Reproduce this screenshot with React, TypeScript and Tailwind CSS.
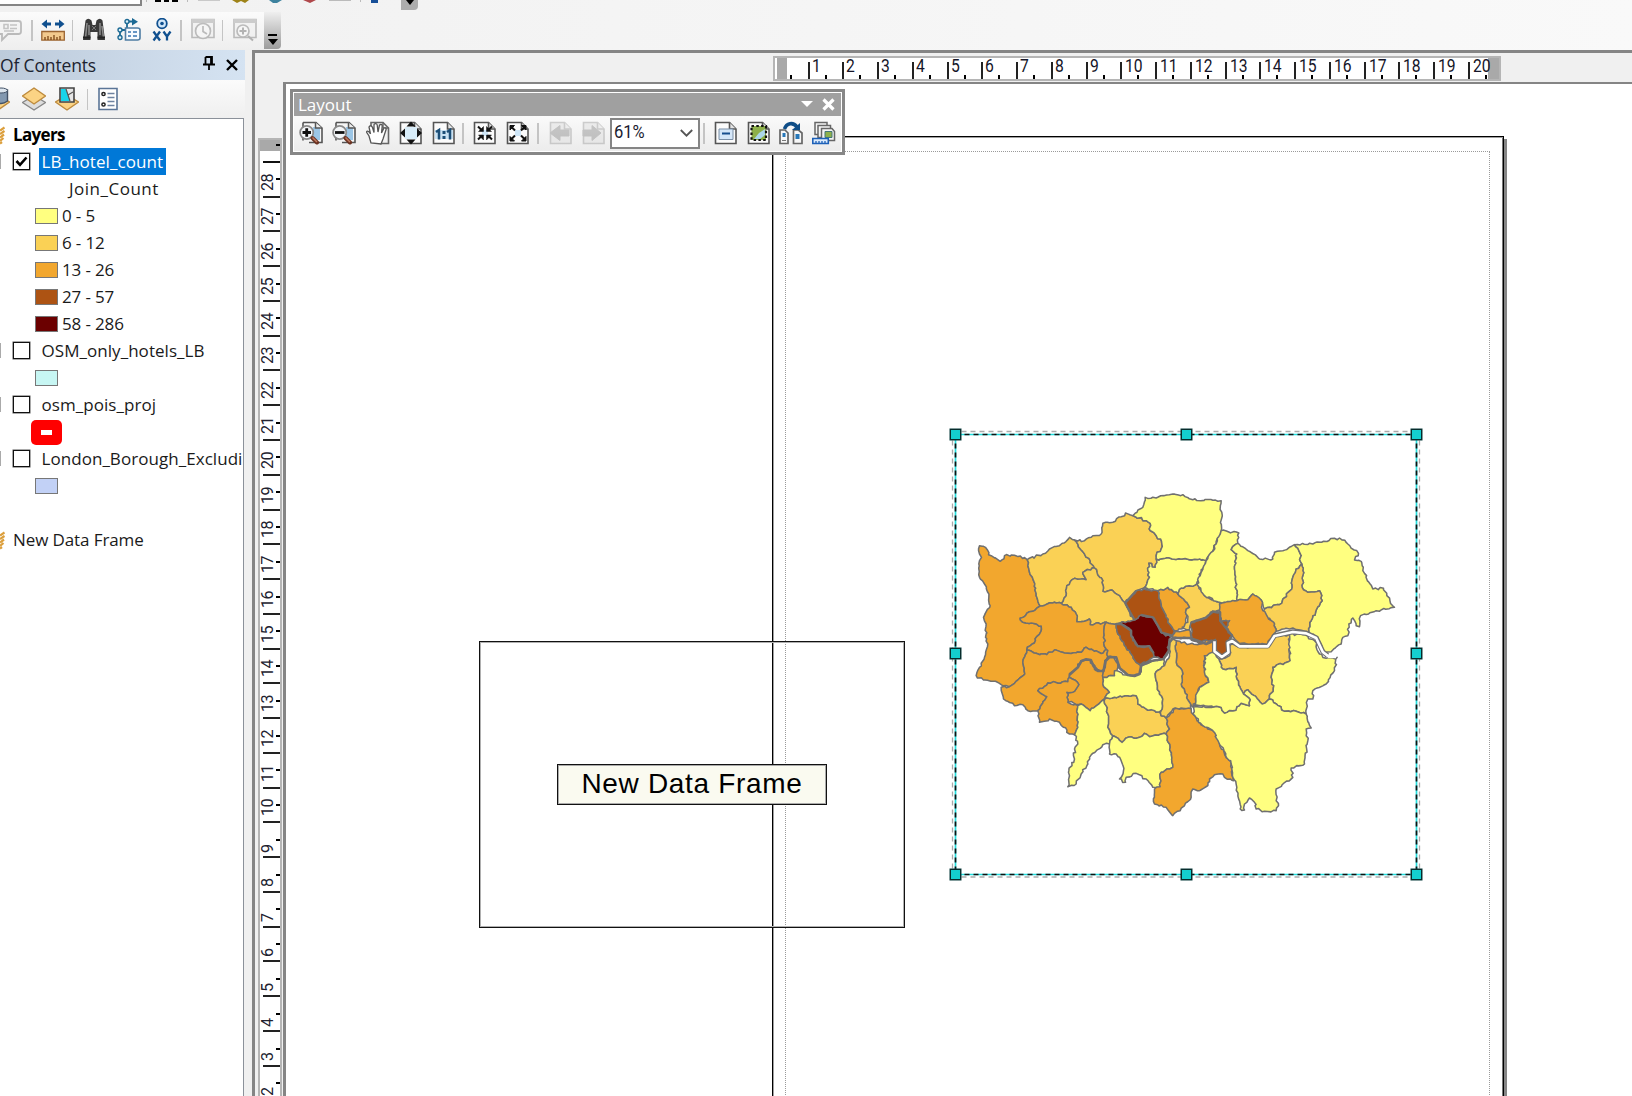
import React, { type ReactNode } from "react";

/* ---------- Map data (drawing units are a third of a pixel) ---------- */

const PALE = "#ffff80";
const LIGHT = "#fad155";
const ORANGE = "#f2a72e";
const BROWN = "#ad5313";
const DARK = "#6b0000";

const WEST: [string, string][] = [
  [ORANGE, "60,195 72,197 95,225 122,242 135,225 165,224 203,237 210,275 222,300 230,345 242,376 220,392 182,413 190,425 245,436 246,445 218,490 202,508 190,545 196,580 165,608 150,618 125,612 100,602 72,598 50,585 60,560 75,530 85,490 78,470 80,430 72,410 92,375 88,350 75,310 60,290 60,240 66,230 60,220"],
  [LIGHT, "203,237 250,220 270,205 300,195 330,170 345,178 375,220 405,262 370,275 380,297 345,293 322,315 320,345 305,368 285,365 242,376 230,345 222,300 210,275"],
  [LIGHT, "345,178 375,180 400,165 425,160 430,128 460,125 485,108 498,97 520,105 560,120 572,128 572,150 590,165 606,182 605,205 590,225 587,260 568,248 565,270 570,290 553,322 530,330 497,367 480,345 455,328 430,332 430,300 405,262 375,220"],
  [LIGHT, "405,262 430,300 430,332 455,328 480,345 497,367 512,395 525,418 505,422 470,430 440,425 392,432 390,415 375,422 352,423 350,400 335,380 305,368 320,345 322,315 345,293 380,297 370,275"],
  [ORANGE, "242,376 285,365 305,368 335,380 350,400 352,423 375,422 390,415 392,432 440,425 432,470 440,505 430,518 405,512 380,500 365,515 325,518 285,508 262,522 230,518 202,508 218,490 246,445 245,436 190,425 182,413 220,392"],
  [ORANGE, "202,508 230,518 262,522 285,508 325,518 365,515 380,500 405,512 430,518 440,505 445,510 445,528 437,540 432,573 410,570 392,537 365,540 355,560 330,580 325,603 265,607 235,630 262,648 235,690 205,690 190,672 165,675 132,655 125,620 150,618 165,608 196,580 190,545"],
  [ORANGE, "355,560 365,540 392,537 410,570 432,573 430,590 430,610 450,635 435,655 392,690 365,670 325,665 322,635 345,632 358,612 330,590 330,580"],
  [ORANGE, "437,540 445,528 465,528 475,560 465,585 430,590 432,573"],
  [ORANGE, "262,648 235,630 265,607 325,603 330,590 358,612 345,632 322,635 325,665 355,675 355,740 345,762 330,760 300,725 270,715 240,725 235,690"],
  [PALE, "355,675 365,670 392,690 435,655 445,700 445,740 460,765 450,790 430,792 390,830 385,850 365,880 350,910 325,918 328,870 345,835 345,805 355,790 345,762 355,740"],
  [LIGHT, "435,655 465,650 530,645 535,670 560,685 600,693 605,705 620,712 630,745 620,760 570,768 555,758 540,770 505,770 488,785 460,765 445,740 445,700"],
  [PALE, "430,590 465,585 465,570 500,583 540,580 545,555 580,540 612,535 615,555 590,573 590,600 600,640 608,650 605,690 600,693 560,685 535,670 530,645 465,650 435,655 450,635 430,610"],
  [PALE, "460,765 488,785 505,770 540,770 555,758 570,768 620,760 632,800 640,860 605,875 602,918 580,920 560,895 530,878 500,890 498,905 480,895 492,870 485,840 470,820 450,820 450,790"],
  [ORANGE, "440,425 470,430 475,460 500,500 530,545 543,555 540,580 505,583 480,560 470,530 445,528 445,510 440,505 432,470"],
  [BROWN, "470,430 485,430 515,450 515,465 535,495 570,495 582,515 590,530 545,550 530,545 500,500 475,460"],
  [DARK, "470,430 505,422 525,418 545,403 580,410 595,435 605,455 618,465 638,465 628,485 625,515 612,535 590,530 582,515 570,495 548,500 535,495 515,465 515,450 485,430"],
  [BROWN, "497,367 530,330 553,325 595,330 605,370 615,395 625,425 645,450 638,465 618,465 605,455 595,435 580,410 545,403 525,418 512,395"],
  [ORANGE, "595,330 625,320 655,340 672,355 690,380 678,395 682,435 665,445 645,450 625,425 615,395 605,370"],
  [ORANGE, "645,452 690,447 695,470 640,472"],
  [LIGHT, "655,340 665,322 712,310 735,345 780,365 780,388 760,392 740,410 695,425 690,447 668,440 685,425 678,395 690,380 672,355"],
  [PALE, "553,322 570,290 565,270 568,248 587,260 590,235 720,235 740,240 725,275 712,310 665,322 655,340 625,320 595,330"],
  [PALE, "520,105 550,80 557,50 590,52 640,40 670,42 700,57 785,60 785,150 770,190 740,240 720,235 590,235 590,225 605,205 606,182 590,165 572,150 572,128 560,120"],
  [ORANGE, "650,480 690,490 720,490 740,478 765,480 765,515 735,525 735,570 748,605 720,620 702,680 690,665 665,610 670,580 650,545"],
  [LIGHT, "640,475 650,480 650,545 670,580 665,610 690,665 695,685 640,685 620,712 605,705 605,690 608,650 600,640 590,600 590,573 615,555 630,520 630,485"],
  [ORANGE, "620,712 650,683 695,685 700,700 730,735 760,750 780,790 815,850 820,890 822,900 795,890 790,880 765,882 750,895 745,915 720,930 700,925 695,950 662,990 640,1005 620,980 585,970 585,925 602,918 605,875 640,860 632,800 620,760 630,745"],
];

const EAST: [string, string][] = [
  [PALE, "125,150 178,157 175,188 155,207 172,220 165,265 172,360 140,368 120,365 75,345 52,310 65,275 80,240 95,215 110,190"],
  [PALE, "175,188 205,210 240,235 280,235 285,215 310,210 345,192 358,210 367,250 350,265 340,290 338,320 300,372 255,385 245,358 225,350 220,340 205,357 172,360 165,265 172,220 155,207"],
  [PALE, "345,192 400,190 480,172 505,190 537,218 525,238 545,242 550,270 580,325 612,323 622,345 645,380 590,390 543,405 540,438 530,435 520,412 508,430 505,465 490,470 485,490 455,513 432,515 415,470 388,455 395,420 428,360 420,330 385,335 368,320 370,270 367,250 358,210"],
  [LIGHT, "367,250 370,270 368,320 385,335 420,330 428,360 395,420 388,455 340,442 290,452 285,430 255,405 255,385 300,372 338,320 340,290 350,265"],
  [ORANGE, "120,370 172,360 205,357 220,340 245,358 250,390 285,430 290,452 265,490 180,490 158,465 140,440 150,420 122,420 122,395"],
  [BROWN, "35,425 80,410 100,392 122,395 122,420 150,420 140,440 158,465 145,485 150,510 130,527 112,520 108,478 80,478 60,490 35,478"],
  [LIGHT, "155,490 180,500 265,497 285,465 330,462 332,540 280,560 275,590 283,615 270,655 248,670 205,627 192,640 172,595 170,560 130,565 118,535 150,525"],
  [PALE, "330,460 370,462 405,480 420,520 440,533 473,530 465,570 440,610 400,630 400,655 385,655 380,700 350,692 315,692 270,655 283,615 275,590 280,560 332,540"],
  [PALE, "270,655 315,692 350,692 380,700 395,742 380,745 385,780 375,850 335,862 340,890 290,925 290,960 297,975 290,990 255,992 230,985 225,965 210,952 195,970 195,988 182,985 172,920 160,890 155,850 120,790 100,750 70,735 40,700 42,680 118,678 135,697 160,690 185,668 210,675 212,657 192,640 205,627 248,670"],
  [PALE, "105,515 118,535 130,565 170,560 172,595 192,640 212,657 210,675 185,668 160,690 135,697 118,678 42,676 60,620 88,605 75,570 75,525"],
];

function noise(x: number, y: number, k: number) {
  const s = Math.sin(x * 12.9898 + y * 78.233 + k * 37.7) * 43758.5453;
  return (s - Math.floor(s) - 0.5) * 7;
}

/* Adds a surveyed, slightly ragged look to every border segment. */
function roughen(points: string) {
  const p = points.split(" ").map((s) => s.split(",").map(Number));
  const out: string[] = [];
  p.forEach(([x, y], i) => {
    const [u, v] = p[(i + 1) % p.length];
    const n = Math.max(1, Math.round(Math.hypot(u - x, v - y) / 8));
    out.push(`${x},${y}`);
    for (let j = 1; j < n; j++) {
      const a = Math.round(x + ((u - x) * j) / n);
      const b = Math.round(y + ((v - y) * j) / n);
      out.push(`${(a + noise(a, b, 1)).toFixed(1)},${(b + noise(a, b, 2)).toFixed(1)}`);
    }
  });
  return out.join(" ");
}

function LondonMap() {
  return (
    <svg className="absolute left-0 top-0" width="463" height="443" viewBox="0 0 1389 1329">
      <g transform="translate(13.5 137)" stroke="#707070" strokeWidth="4.6" strokeLinejoin="round" fill="none">
        {WEST.map(([c, p], i) => (
          <polygon key={i} points={roughen(p)} fill={c} />
        ))}
        <g transform="translate(660 0)">
          {EAST.map(([c, p], i) => (
            <polygon key={i} points={roughen(p)} fill={c} />
          ))}
        </g>
        <path strokeWidth="8" d="M330 582l25-22 10-18 15-6 14 2 8 18 14 15 16 0 6-30 12-12 20 1 10 32 25 21 20 3 15-6 5-25 30-14 37-6 16-25 2-25 10-13h50l30 10 20 8 30-13" />
        <path strokeWidth="7" d="M497 367l15 28 13 23M530 330l-33 37M545 403l35 7 15 25 10 20 33 10M470 430h15l30 20v15l20 32h35l12 20M695 425l45-14 20-18 22 2v25l36 45-13 20" />
        <path strokeWidth="15" strokeLinecap="butt" d="M765 478v34l22 17 20-14-2-30 13-5 22 16h85l20-31 55-12 40 4 30 14 20 42 14 12" />
        <path stroke="#fff" strokeWidth="8" strokeLinecap="butt" d="M765 482v30l22 17 20-14-2-28 13-6 22 16h85l20-31 55-12 40 4 30 14 20 42 18 14 22 1" />
      </g>
    </svg>
  );
}

/* ---------- Icons ---------- */

function Ico({ children, dim, w = 24 }: { children: ReactNode; dim?: boolean; w?: number }) {
  return (
    <svg width={w} height="24" viewBox={`0 0 ${w} 24`} fill="none" className={dim ? "shrink-0 opacity-45" : "shrink-0"}>
      {children}
    </svg>
  );
}

function Sheet({ gray }: { gray?: boolean }) {
  return (
    <g stroke={gray ? "#999" : "#555"} strokeWidth="1.6">
      <path d="M1.5 1.5H15.500L22 8v14.500H1.500z" fill={gray ? "#ddd" : "#fbfbfb"} />
      <path d="M15.500 1.500V8H22" fill="#e4e4e4" />
    </g>
  );
}

function Magnifier({ plus }: { plus?: boolean }) {
  return (
    <Ico>
      <path d="M4 1.500h13L23 7v14.500H10M4 19.500V1.500" stroke="#555" strokeWidth="1.600" fill="#f6f6f6" />
      <path d="M14 6h7v13h-7z" fill="#9cc6e6" />
      <path d="M16.500 1.500V7H23" stroke="#555" strokeWidth="1.500" fill="#eee" />
      <circle cx="7.700" cy="11.500" r="6.600" fill="#f4f6f8" stroke="#8a8a8a" strokeWidth="1.800" />
      <path d={plus ? "M3.500 11.500h8.500M7.700 7.300v8.500" : "M3 11.500h9.500"} stroke="#111" strokeWidth="2.800" />
      <path d="M13.500 17l4.500 4.500" stroke="#6b3322" strokeWidth="4" strokeLinecap="round" />
      <path d="M13.500 16.500l4.500 4.500" stroke="#c17b62" strokeWidth="1.500" />
    </Ico>
  );
}

const Hand = () => (
  <Ico>
    <path d="M5 7V1.500h12L22.500 7v15.500H14" stroke="#666" strokeWidth="1.600" fill="#f1f1f1" />
    <path d="M17 1.500V7h5.500" stroke="#666" strokeWidth="1.400" />
    <path d="M5 22l-2-7-2.500-4c1-2 3 0 4 2L3 6c1-2 3-1 3.500.5l1.500 5L8 3.500c1-1.500 3-1 3.200.5l.8 7 1.500-7c1.500-1 3-.3 2.700 1.200L15.500 12l2.500-5c1.500-.5 2.500.3 2 1.800L17 18l-2 5z" fill="#fff" stroke="#555" strokeWidth="1.300" />
  </Ico>
);

const FullExtent = () => (
  <Ico>
    <Sheet />
    <path d="M6 6h12v12H6z" fill="#d8ecf8" />
    <path d="M12 .5l4.500 5h-9zM12 23.500l4.500-5h-9zM1 12l5-4.500v9zM23 12l-5-4.500v9z" fill="#111" />
  </Ico>
);

const OneToOne = () => (
  <Ico>
    <Sheet />
    <path d="M3 9h18v9H3z" fill="#c9e2f3" />
    <path d="M4 11l3-2v9.500M15 11l3-2v9.500" stroke="#1b4e77" strokeWidth="2.500" />
    <path d="M10.500 10h3v3h-3zM10.500 15h3v3h-3z" fill="#1b4e77" />
  </Ico>
);

function FixedZoom({ out }: { out?: boolean }) {
  return (
    <Ico>
      <Sheet />
      <path d="M9 9h6v6H9z" fill="#cfe6f7" />
      <g stroke="#111" strokeWidth="2" fill="#111">
        <path d="M5 5.500l4 4M19 5.500l-4 4M5 18.500l4-4M19 18.500l-4-4" />
        {out ? (
          <path d="M4 4.500h4.500L4 9zM20 4.500V9l-4.500-4.500zM4 20v-4.500L8.500 20zM20 20h-4.500l4.500-4.500z" strokeWidth="1" />
        ) : (
          <path d="M10.500 5.500v5h-5zM13.500 5.500v5h5zM10.500 19v-5h-5zM13.500 19v-5h5z" strokeWidth="0.500" />
        )}
      </g>
    </Ico>
  );
}

function Nav({ forward }: { forward?: boolean }) {
  return (
    <Ico dim>
      <Sheet gray />
      <path d={forward ? "M1 9h9V4.500l9 7.500-9 7.500V15H1z" : "M20 9h-9V4.500L1 12l10 7.500V15h9z"} fill="#888" stroke="#888" />
    </Ico>
  );
}

const DraftMode = () => (
  <Ico>
    <Sheet />
    <path d="M5 8h14v10.500H5z" fill="#d5e7f9" stroke="#7b8fa6" />
    <path d="M8 12.500h8" stroke="#174f8e" strokeWidth="2" />
  </Ico>
);

const FocusFrame = () => (
  <Ico>
    <Sheet />
    <path d="M4.500 5h14.500v14H4.500z" fill="#8db04a" />
    <path d="M7 18l5-6 6-4v6l-5 4z" fill="#abd7ea" />
    <path d="M4.500 5h14.500v14H4.500z" stroke="#111" strokeWidth="2.200" strokeDasharray="2.500 2.300" />
  </Ico>
);

const ChangeLayout = () => (
  <Ico>
    <path d="M1 9h5l3 3v10.500H1zM14.500 9h5l3.500 3v10.500h-8.500z" fill="#f7f7f7" stroke="#666" strokeWidth="1.700" />
    <path d="M3.500 12h3v4h-3zM16.500 13h4v5h-4z" fill="#2777b8" />
    <path d="M3 19.500h4" stroke="#777" />
    <path d="M5.500 8C7.500 2 14 .5 18 6" stroke="#0f4d87" strokeWidth="3.600" />
    <path d="M13 9h8V2z" fill="#0f4d87" />
  </Ico>
);

const DataDriven = () => (
  <Ico>
    <g fill="#f5f5f5" stroke="#666" strokeWidth="1.500">
      <path d="M3 1.500h12v12H3z" />
      <path d="M6 4.500h12.500v12H6z" />
      <path d="M9.500 7.500H20l2.500 3v9h-13z" />
    </g>
    <path d="M13 10.500h7v6h-7z" fill="#8db04a" stroke="#477" />
    <path d="M.8 17.500h15.500v5H.8z" fill="#dbeafb" stroke="#1d61b8" strokeWidth="1.600" />
    <path d="M4 20v2M7 20v2M10 20v2M13 20v2" stroke="#1d61b8" strokeWidth="1.300" />
  </Ico>
);

const HtmlPopup = () => (
  <Ico dim>
    <path d="M0 3h18.500q2.500 0 2.500 2.500v8q0 2.500-2.500 2.500H8l-6 6v-6H0" fill="#f2f2f2" stroke="#777" strokeWidth="1.800" />
    <path d="M4 6.500h4v4H4zM10 7h7M10 10.500h7M4 13h10" stroke="#888" strokeWidth="1.600" />
  </Ico>
);

const Measure = () => (
  <Ico>
    <path d="M.5 6L6 1.500v3h4v3H6v3zM23.500 6L18 1.500v3h-4v3h4v3z" fill="#10508f" />
    <path d="M.8 13.500h22.500v8.700H.8z" fill="#f3c98d" stroke="#9b6432" strokeWidth="1.300" />
    <path d="M4 22v-3M7 22v-4M10 22v-3M13 22v-5M16 22v-3M19 22v-4" stroke="#7c4515" strokeWidth="1.300" />
  </Ico>
);

const Binoculars = () => (
  <Ico>
    <path d="M3.500 2.500Q6-1 9.500 2.500L10.500 7h3l1-4.500Q18-1 20.500 2.500L23 22h-7.500V14h-7v8H1z" fill="#3a3a3a" />
    <path d="M5 5L3.500 20M7 7v10M18 5v12M20 8l1.500 12" stroke="#8d8d8d" strokeWidth="1.500" />
    <path d="M10 8l4 4M14 8l-4 4" stroke="#777" />
    <path d="M1 19.500h7.500M15.500 19.500h7.500" stroke="#222" strokeWidth="2" />
  </Ico>
);

const Route = () => (
  <Ico>
    <path d="M3 19v-7h7V3.500h7" stroke="#1d6a94" strokeWidth="1.800" />
    <path d="M15 0l6 3.800-6 3.700z" fill="#1d6a94" />
    <g fill="#dff1fa" stroke="#1d6a94" strokeWidth="1.400">
      <circle cx="3" cy="12" r="2" />
      <circle cx="10" cy="3.500" r="2" />
      <circle cx="3" cy="19.500" r="2" />
    </g>
    <path d="M8.500 10h12q2.500 0 2.500 2v8q0 2-2.500 2h-12z" fill="#f7fbff" stroke="#4e7ca3" strokeWidth="1.600" />
    <path d="M11 14h3M16 14h4M11 18h3M16 18h4" stroke="#3776b2" strokeWidth="1.500" />
  </Ico>
);

const GoToXY = () => (
  <Ico w={20}>
    <circle cx="10" cy="5.500" r="4.800" stroke="#10508f" strokeWidth="1.800" fill="#d3e8fa" />
    <circle cx="10" cy="5.500" r="1.800" fill="#10508f" />
    <path d="M1.500 13.500l6.500 9M8 13.500l-6.500 9M11.500 13.500l3.500 5 3.500-5M15 18v4.500" stroke="#10508f" strokeWidth="2.300" />
  </Ico>
);

function GrayWindow({ zoom }: { zoom?: boolean }) {
  return (
    <Ico dim>
      <path d="M1 1.500h22v18H1z" fill="#eee" stroke="#777" strokeWidth="1.600" />
      <path d="M1 1h22v4H1z" fill="#999" />
      <circle cx={zoom ? 10 : 12} cy="13" r={zoom ? 6 : 7.500} fill="#f8f8f8" stroke="#777" strokeWidth="1.700" />
      {zoom ? (
        <path d="M6.500 13h7M10 9.500v7M15 18l5 4.500" stroke="#666" strokeWidth="2" />
      ) : (
        <path d="M12 8v5.500l4 2.500" stroke="#777" strokeWidth="1.700" />
      )}
    </Ico>
  );
}

const Diamonds = ({ kind }: { kind: "source" | "visible" | "selected" }) => (
  <Ico>
    {kind === "visible" && <path d="M12 8.500l11.500 7L12 23 .5 15.500z" fill="#ddd" stroke="#888" strokeWidth="1.400" />}
    <path d={kind === "visible" ? "M12 1l11.500 8L12 17 .5 9z" : "M12 8l11.500 7L12 23 .5 15z"} fill="#fbd384" stroke="#bd8a3d" strokeWidth="1.400" />
    {kind === "source" && (
      <>
        <path d="M9 3v11q6 5 12.500 0V3z" fill="#8298b0" stroke="#425166" strokeWidth="1.400" />
        <ellipse cx="15" cy="3.500" rx="6.500" ry="2.500" fill="#dbe4ed" stroke="#425166" />
      </>
    )}
    {kind === "selected" && (
      <>
        <path d="M5 1h14v14H5z" fill="#e6e6e6" stroke="#444" strokeWidth="1.600" />
        <path d="M6 2h5l2 6 2 6H6z" fill="#18d5ea" />
        <path d="M11 2l2 6 2 6M13 8l5-3" stroke="#555" strokeWidth="1.200" />
      </>
    )}
  </Ico>
);

const ListOptions = () => (
  <Ico w={20}>
    <path d="M1 1.500h18v21H1z" fill="#fff" stroke="#5b7597" strokeWidth="1.600" />
    <circle cx="5.500" cy="7" r="1.600" stroke="#222" strokeWidth="1.500" />
    <circle cx="5.500" cy="17.500" r="1.600" stroke="#222" strokeWidth="1.500" />
    <path d="M9.500 6.500h7M9.500 10.500h7M9.500 14.500h7M9.500 18.500h7" stroke="#6f83a0" strokeWidth="1.300" />
  </Ico>
);

const FrameStack = () => (
  <svg width="5" height="20" viewBox="0 0 5 20" className="shrink-0">
    <path d="M0 5.500L4.500 2.500M0 9L4.500 6M0 12.500L4 9.500M0 16l3.500-3M0 18.500L2 17" stroke="#dc9f3c" strokeWidth="2.200" />
  </svg>
);

/* ---------- Shared bits ---------- */

const Sep = ({ m }: { m: string }) => <div className={`h-[21px] w-[1.5px] shrink-0 bg-[#c4c4c4] ${m}`} />;

const Grip = ({ h }: { h: string }) => (
  <div className={`flex w-[17px] shrink-0 flex-col items-center justify-end rounded-br bg-linear-to-b from-[#efefef] to-[#9c9c9c] pb-1 ${h}`}>
    <div className="mb-[3px] h-[2px] w-[9px] bg-black" />
    <svg width="10" height="6" viewBox="0 0 10 6">
      <path d="M0 0h10L5 6z" fill="#000" />
    </svg>
  </div>
);

/* ---------- Table of contents ---------- */

function Row({ children }: { children?: ReactNode }) {
  return <div className="flex h-[27px] items-center whitespace-nowrap">{children}</div>;
}

function LayerRow({ name, checked }: { name: string; checked?: boolean }) {
  return (
    <Row>
      <div className="h-[15px] w-px shrink-0 bg-[#aaa]" />
      <div className="ml-[11.5px] flex size-[17px] shrink-0 items-center justify-center border-[1.5px] border-[#111] bg-white shadow-[0_0_0_0.5px_#555]">
        {checked && (
          <svg width="13" height="13" viewBox="0 0 13 13">
            <path d="M1.500 6L5 9.800 11.500 2.500" stroke="#000" strokeWidth="2.600" fill="none" />
          </svg>
        )}
      </div>
      {checked ? (
        <span className="ml-[9px] flex h-[27px] w-[127px] shrink-0 items-center bg-[#0078d7] pb-px pl-[3px] tracking-[0.08px] text-white">{name}</span>
      ) : (
        <span className="ml-3 pb-px tracking-[0.05px]">{name}</span>
      )}
    </Row>
  );
}

const Swatch = ({ color }: { color: string }) => (
  <div className={`ml-[35px] mt-px h-[16.5px] w-[22.5px] shrink-0 border-[1.5px] border-[#777] ${color}`} />
);

const CLASSES = [
  { color: "bg-[#ffff80]", label: "0 - 5" },
  { color: "bg-[#fad155]", label: "6 - 12" },
  { color: "bg-[#f2a72e]", label: "13 - 26" },
  { color: "bg-[#ad5313]", label: "27 - 57" },
  { color: "bg-[#6b0000]", label: "58 - 286" },
];

function Contents() {
  return (
    <aside className="flex w-[245px] shrink-0 flex-col">
      <header className="flex h-[30px] items-center bg-linear-to-r from-[#bdcbdb] to-[#d5e3f2]">
        <span className="w-[203px] pt-px text-[17.5px] tracking-[-0.15px] text-[#1c2330]">Of Contents</span>
        <svg width="12" height="15" viewBox="0 0 12 15" className="mb-1">
          <path d="M2.500 1h6.500v7M2.500 1v7M8 1v7M0 8.500h12M6 8.500V14" stroke="#000" strokeWidth="1.800" fill="none" />
        </svg>
        <svg width="12" height="12" viewBox="0 0 12 12" className="-mt-px ml-[11px]">
          <path d="M1 1l10 10M11 1L1 11" stroke="#000" strokeWidth="2.400" />
        </svg>
      </header>
      <div className="flex h-[38px] items-center bg-linear-to-b from-[#fbfbfb] to-[#efefef]">
        <div className="-ml-[14px] flex"><Diamonds kind="source" /></div>
        <div className="ml-[11.500px] flex"><Diamonds kind="visible" /></div>
        <div className="ml-[9px] flex"><Diamonds kind="selected" /></div>
        <Sep m="mx-[8px]" />
        <div className="ml-[2px] flex"><ListOptions /></div>
      </div>
      <div className="w-[244px] grow overflow-hidden border-r-[1.5px] border-t-[1.5px] border-[#8b919a] bg-white pt-[2px] text-[17px] leading-[27px] text-[#1a1a1a]">
        <Row><FrameStack /><span className="ml-2 font-bold tracking-[-0.65px] text-black">Layers</span></Row>
        <LayerRow name="LB_hotel_count" checked />
        <Row><span className="ml-[69px] tracking-[0.5px]">Join_Count</span></Row>
        {CLASSES.map((c) => (
          <Row key={c.label}><Swatch color={c.color} /><span className="ml-[4.5px] pb-px tracking-[-0.15px]">{c.label}</span></Row>
        ))}
        <LayerRow name="OSM_only_hotels_LB" />
        <Row><Swatch color="bg-[#c7f6f3]" /></Row>
        <LayerRow name="osm_pois_proj" />
        <Row>
          <div className="ml-[30.500px] mt-px flex h-[25px] w-[31.5px] items-center justify-center rounded-[5px] bg-[#ff0000]">
            <div className="h-[5px] w-[11px] bg-white" />
          </div>
        </Row>
        <LayerRow name="London_Borough_Excludi" />
        <Row><Swatch color="bg-[#c2d1f6]" /></Row>
        <Row />
        <Row><FrameStack /><span className="ml-2 pb-px tracking-[-0.1px]">New Data Frame</span></Row>
      </div>
    </aside>
  );
}

/* ---------- Rulers ---------- */

const ACROSS = Array.from({ length: 20 }, (_, i) => i + 1);
const DOWN = Array.from({ length: 27 }, (_, i) => 28 - i);

function TopRuler() {
  return (
    <div className="flex h-[30px] pt-[3px]">
      <div className="relative ml-[518px] flex h-[25px] w-[728px] border-2 border-[#b5b5b5] bg-white">
        <div className="ml-[2px] h-[21px] w-[10px] shrink-0 bg-[#a9a9a9]" />
        <div className="mt-[17px] ml-[3px] h-[4px] w-[2px] shrink-0 bg-black" />
        <div className="w-[15.5px] shrink-0" />
        {ACROSS.map((n) => (
          <div key={n} className={n === 20 ? "relative z-10 w-[20px] shrink-0" : "relative w-[34.76px] shrink-0"}>
            <div className="mt-[4px] h-[17px] w-[2px] bg-[#222]" />
            <span className={`absolute -top-[2px] origin-left scale-x-[0.87] font-[Roboto] text-[18px] leading-[19px] text-[#151528] ${n < 10 ? "left-[4px]" : "left-[5px]"}`}>{n}</span>
            <div className="absolute left-[17px] top-[17px] h-[4px] w-[2px] bg-black" />
          </div>
        ))}
        <div className="h-[21px] grow bg-[#a9a9a9]" />
      </div>
    </div>
  );
}

function SideRuler() {
  return (
    <div className="flex w-[28px] shrink-0 flex-col overflow-hidden bg-[#f0f0f0] pl-[3px] pt-[56px]">
      <div className="flex w-[24px] grow flex-col border-x-2 border-t-2 border-[#b5b5b5] bg-white">
        <div className="flex h-[11px] shrink-0 justify-end bg-[#a9a9a9] pt-1"><div className="h-[2px] w-[4px] bg-black" /></div>
        <div className="mt-[10px] ml-[3px] h-[2px] shrink-0 bg-[#111]" />
        {DOWN.map((n) => (
          <div key={n} className="relative h-[34.78px] shrink-0">
            <div className="absolute right-0 top-[15.500px] h-[2px] w-[4px] bg-black" />
            <div className={`absolute left-0 flex h-[20px] w-[20px] items-center ${n < 10 ? "bottom-[5.5px]" : "bottom-[7px]"}`}>
              <span className="absolute bottom-0 left-0 origin-bottom-left translate-x-[17px] -rotate-90 scale-x-[0.95] font-[Roboto] text-[17px] leading-[19px] tracking-[-0.5px] text-[#222230]">{n}</span>
            </div>
            <div className="absolute bottom-0 left-[3px] right-0 h-[2px] bg-[#222]" />
          </div>
        ))}
      </div>
    </div>
  );
}

/* ---------- Floating layout toolbar ---------- */

function LayoutToolbar() {
  return (
    <div className="absolute left-[4px] top-[5px] z-20 h-[66px] w-[555px] border-[3px] border-[#878787] bg-white p-px">
      <div className="flex h-[23px] items-center bg-[#a0a0a0] pl-[4px] pr-[6px]">
        <span className="grow pt-px text-[17px] leading-[22px] text-white">Layout</span>
        <svg width="12" height="6" viewBox="0 0 12 6"><path d="M0 0h12L6 6z" fill="#fff" /></svg>
        <svg width="13" height="13" viewBox="0 0 13 13" className="ml-[9px]"><path d="M1.500 1.500l10 10M11.500 1.500l-10 10" stroke="#fff" strokeWidth="3.200" /></svg>
      </div>
      <div className="flex h-[35px] items-center bg-linear-to-b from-[#fafafa] to-[#ececec] pl-[5px]">
        <div className="flex gap-[9.3px]"><Magnifier plus /><Magnifier /><Hand /><FullExtent /><OneToOne /></div>
        <Sep m="ml-[6px] mr-[9.5px]" />
        <div className="flex gap-[9px]"><FixedZoom /><FixedZoom out /></div>
        <Sep m="ml-[7px] mr-[10.5px]" />
        <div className="flex gap-[9px]"><Nav /><Nav forward /></div>
        <div className="ml-[4px] flex h-[31px] w-[90px] shrink-0 items-center justify-between border-2 border-[#858585] bg-white pl-[2px] pr-[5px]">
          <span className="origin-left scale-x-[0.92] pb-[3px] font-[Roboto] text-[18px] text-[#1b1b30]">61%</span>
          <svg width="13" height="8" viewBox="0 0 13 8"><path d="M.8 1l5.700 5.700L12.200 1" stroke="#555" strokeWidth="1.800" fill="none" /></svg>
        </div>
        <Sep m="ml-[3px] mr-[9.5px]" />
        <div className="flex gap-[8.500px]"><DraftMode /><FocusFrame /><ChangeLayout /><DataDriven /></div>
      </div>
    </div>
  );
}

/* ---------- Page canvas ---------- */

const HANDLES = [
  "left-[8px] top-[8px]", "left-[239px] top-[8px]", "left-[469px] top-[8px]",
  "left-[8px] top-[227px]", "left-[469px] top-[227px]",
  "left-[8px] top-[448px]", "left-[239px] top-[448px]", "left-[469px] top-[448px]",
];

function Selection() {
  return (
    <div className="absolute left-[656px] top-[337px] h-[466px] w-[486px]">
      <svg width="486" height="466" className="absolute left-0 top-0" fill="none">
        <path d="M10.500 10.500h467M10.500 456h467M10.500 10.500v446M477.500 10.500v446" stroke="#aaa" strokeWidth="1.300" strokeDasharray="5 4" />
        <path d="M13.500 13.500h461v440h-461z" stroke="#22dede" strokeWidth="1.700" />
        <path d="M13.500 13.500h461M13.500 453.500h461M13.500 13.500v440M474.500 13.500v440" stroke="#111" strokeWidth="1.700" strokeDasharray="5 4" />
      </svg>
      <div className="absolute left-[13px] top-[14px] h-[443px] w-[463px]"><LondonMap /></div>
      {HANDLES.map((h) => (
        <div key={h} className={`absolute size-[11px] border-[1.5px] border-[#082c2c] bg-[#14cfcf] shadow-[0_0_0_0.5px_#083c3c] ${h}`} />
      ))}
    </div>
  );
}

function Canvas() {
  return (
    <main className="relative grow overflow-hidden border-l-[3px] border-t-2 border-[#858585] bg-white">
      <div className="absolute left-[486px] top-[52px] h-[1000px] w-[732px] border border-black bg-white shadow-[inset_1px_1px_0_0_#a0a0a0,inset_-1px_0_0_0_#777,3px_3px_0_0_#858585]">
        <div className="absolute left-[12px] top-[14px] h-[1000px] w-[705px] border border-dotted border-[#9a9a9a]" />
      </div>
      <div className="absolute left-[193px] top-[557px] h-[287px] w-[426px] border border-[#111] shadow-[inset_0_0_0_1px_#b0b0b0]">
        <div className="absolute left-[77px] top-[122px] flex h-[41px] w-[270px] items-center justify-center border border-[#111] bg-[#fafaf0] font-['Liberation_Sans'] text-[28px] tracking-[0.68px] text-black shadow-[inset_0_0_0_1px_#aaa]">
          New Data Frame
        </div>
      </div>
      <Selection />
      <LayoutToolbar />
    </main>
  );
}

/* ---------- Main window ---------- */

function TopBars() {
  return (
    <div className="flex h-[50px] shrink-0 flex-col bg-linear-to-r from-[#f1f1f1] to-[#f9f9f9]">
      <div className="flex h-[12px] shrink-0 items-start overflow-hidden">
        <div className="h-[6px] w-[142px] border-b-2 border-r-2 border-[#858585] bg-white" />
        <div className="ml-1 h-[2px] w-px bg-[#bbb]" />
        <div className="ml-2 h-[2px] w-[6px] bg-black" />
        <div className="ml-[3px] h-[2px] w-[5px] bg-black" />
        <div className="ml-[3px] h-[2px] w-[6px] bg-black" />
        <div className="ml-[9px] h-[2px] w-px bg-[#bbb]" />
        <div className="ml-[10px] h-px w-[22px] bg-[#c9c9c9]" />
        <svg width="17" height="4" className="ml-[12px]"><path d="M0 0h17l-4 3-4-2-4 2z" fill="#9e8318" /></svg>
        <svg width="13" height="4" className="ml-[20px]"><path d="M0 0h13L8 3H4z" fill="#3d829e" /></svg>
        <svg width="13" height="4" className="ml-[21px]"><path d="M0 0h13L7 3z" fill="#b0484b" /></svg>
        <div className="ml-[13px] h-px w-[22px] bg-[#bbb]" />
        <div className="ml-[9px] h-[2px] w-px bg-[#bbb]" />
        <div className="ml-[10px] h-[3px] w-[7px] bg-[#174f98]" />
        <div className="ml-[23px] flex h-[10px] w-[17px] justify-center rounded-br bg-[#adadad]">
          <svg width="10" height="6" viewBox="0 0 10 6"><path d="M1 0h8L5 5z" fill="#000" /></svg>
        </div>
      </div>
      <div className="flex h-[38px] w-[281px] items-start bg-linear-to-b from-[#fbfbfb] to-[#eeeeee]">
        <div className="flex h-[36px] w-[264px] items-center">
          <div className="-mr-[2px] flex"><HtmlPopup /></div>
          <Sep m="ml-[9px] mr-[8px]" />
          <Measure />
          <Sep m="ml-[7px] mr-[9px]" />
          <Binoculars />
          <div className="ml-[10.5px] flex"><Route /></div>
          <div className="ml-[11px] flex"><GoToXY /></div>
          <Sep m="ml-[8.5px] mr-[9px]" />
          <GrayWindow />
          <Sep m="ml-[7px] mr-[10px]" />
          <GrayWindow zoom />
        </div>
        <Grip h="h-[37px]" />
      </div>
    </div>
  );
}

export default function App() {
  return (
    <div className="flex h-[1096px] w-full flex-col overflow-hidden bg-[#f0f0f0] font-['Open_Sans',sans-serif]">
      <TopBars />
      <div className="flex min-h-0 grow">
        <Contents />
        <section className="ml-[7px] flex min-w-0 grow flex-col border-l-[3px] border-t-[3px] border-[#858585]">
          <TopRuler />
          <div className="-mt-px flex min-h-0 grow">
            <SideRuler />
            <Canvas />
          </div>
        </section>
      </div>
    </div>
  );
}
